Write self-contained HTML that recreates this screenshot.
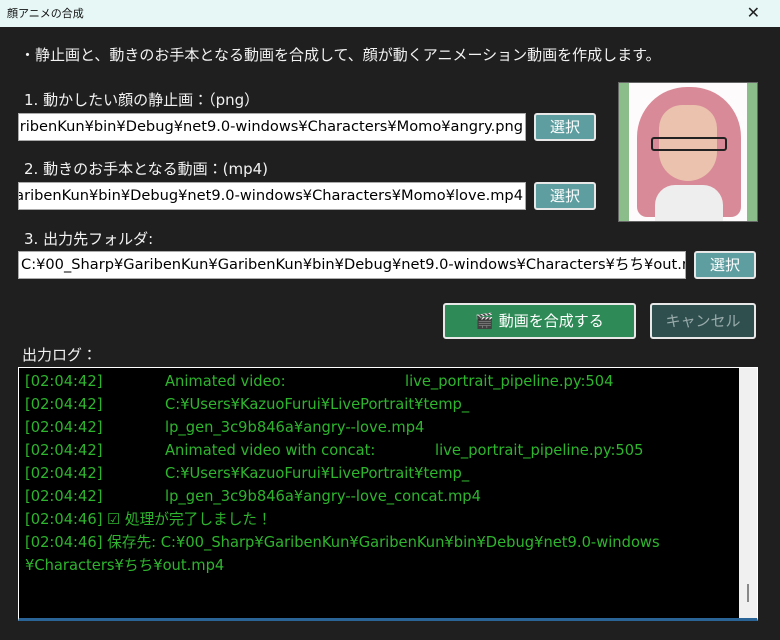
<!DOCTYPE html>
<html><head><meta charset="utf-8"><style>
*{margin:0;padding:0;box-sizing:border-box}
body{width:780px;height:640px;background:#1f1f1f;font-family:"DejaVu Sans","Noto Sans CJK JP",sans-serif;color:#fff;position:relative;overflow:hidden}
.abs{position:absolute}
.title{left:0;top:0;width:780px;height:27px;background:#e6f7f6;color:#111;font-size:11px;line-height:27px;padding-left:7px}
.lbl{font-size:15px;color:#f2f2f2;white-space:nowrap}
.inp{background:#fff;border:1px solid #aaa;color:#000;font-size:14.6px;line-height:26px;height:28px;overflow:hidden;white-space:nowrap}
.btn{background:#5f9ea0;border:2px solid #e8e8e8;border-radius:3px;color:#fff;font-size:15px;text-align:center;line-height:24px;height:28px}
.log{left:18px;top:367px;width:740px;height:254px;background:#000;border:1px solid #fff;border-bottom:3px solid #2a6496}
.ln{position:absolute;left:6px;color:#2eb52e;font-size:14.7px;white-space:nowrap;line-height:23px}
</style></head><body>
<div class="abs title">顔アニメの合成<span style="position:absolute;right:20px;top:0;font-size:16px;color:#222;font-family:'Liberation Sans',sans-serif">✕</span></div>
<div class="abs lbl" style="left:20px;top:44px">・静止画と、動きのお手本となる動画を合成して、顔が動くアニメーション動画を作成します。</div>
<div class="abs lbl" style="left:24px;top:89px">1. 動かしたい顔の静止画：（png）</div>
<div class="abs inp" style="left:18px;top:113px;width:508px;direction:rtl;text-align:right;padding-right:2px"><span style="direction:ltr;unicode-bidi:bidi-override">C:¥00_Sharp¥GaribenKun¥GaribenKun¥bin¥Debug¥net9.0-windows¥Characters¥Momo¥angry.png</span></div>
<div class="abs btn" style="left:534px;top:113px;width:62px">選択</div>
<div class="abs lbl" style="left:24px;top:158px">2. 動きのお手本となる動画：(mp4)</div>
<div class="abs inp" style="left:18px;top:182px;width:508px;direction:rtl;text-align:right;padding-right:2px"><span style="direction:ltr;unicode-bidi:bidi-override">C:¥00_Sharp¥GaribenKun¥GaribenKun¥bin¥Debug¥net9.0-windows¥Characters¥Momo¥love.mp4</span></div>
<div class="abs btn" style="left:534px;top:182px;width:62px">選択</div>
<div class="abs lbl" style="left:24px;top:228px">3. 出力先フォルダ:</div>
<div class="abs inp" style="left:18px;top:251px;width:668px;padding-left:2px">C:¥00_Sharp¥GaribenKun¥GaribenKun¥bin¥Debug¥net9.0-windows¥Characters¥ちち¥out.mp4</div>
<div class="abs btn" style="left:694px;top:251px;width:62px">選択</div>
<div class="abs" style="left:618px;top:82px;width:140px;height:140px;background:#8bbd8b;border:1px solid #666">
<div style="position:absolute;left:10px;top:0;width:118px;height:138px;background:#fdfbfb;overflow:hidden">
<div style="position:absolute;left:8px;top:4px;width:104px;height:130px;background:#d98a98;border-radius:50px 50px 10px 10px"></div>
<div style="position:absolute;left:30px;top:22px;width:58px;height:76px;background:#eac2ad;border-radius:24px 24px 30px 30px"></div>
<div style="position:absolute;left:22px;top:54px;width:76px;height:14px;border:2px solid #222;border-radius:3px"></div>
<div style="position:absolute;left:26px;top:102px;width:68px;height:40px;background:#eee;border-radius:20px 20px 0 0"></div>
</div></div>
<div class="abs" style="left:443px;top:303px;width:193px;height:36px;background:#2e8b57;border:2px solid #e8e8e8;border-radius:3px;color:#fff;font-size:15px;text-align:center;line-height:32px">🎬 動画を合成する</div>
<div class="abs" style="left:650px;top:303px;width:106px;height:36px;background:#2f4f4f;border:2px solid #e8e8e8;border-radius:3px;color:#9aa;font-size:15px;text-align:center;line-height:32px">キャンセル</div>
<div class="abs lbl" style="left:22px;top:344px">出力ログ：</div>
<div class="abs log">
<div class="ln" style="top:2px">[02:04:42]</div><div class="ln" style="left:146px;top:2px">Animated video:</div><div class="ln" style="left:386px;top:2px">live_portrait_pipeline.py:504</div>
<div class="ln" style="top:25px">[02:04:42]</div><div class="ln" style="left:146px;top:25px">C:¥Users¥KazuoFurui¥LivePortrait¥temp_</div>
<div class="ln" style="top:48px">[02:04:42]</div><div class="ln" style="left:146px;top:48px">lp_gen_3c9b846a¥angry--love.mp4</div>
<div class="ln" style="top:71px">[02:04:42]</div><div class="ln" style="left:146px;top:71px">Animated video with concat:</div><div class="ln" style="left:416px;top:71px">live_portrait_pipeline.py:505</div>
<div class="ln" style="top:94px">[02:04:42]</div><div class="ln" style="left:146px;top:94px">C:¥Users¥KazuoFurui¥LivePortrait¥temp_</div>
<div class="ln" style="top:117px">[02:04:42]</div><div class="ln" style="left:146px;top:117px">lp_gen_3c9b846a¥angry--love_concat.mp4</div>
<div class="ln" style="top:140px">[02:04:46] ☑ 処理が完了しました！</div>
<div class="ln" style="top:163px">[02:04:46] 保存先: C:¥00_Sharp¥GaribenKun¥GaribenKun¥bin¥Debug¥net9.0-windows</div>
<div class="ln" style="top:186px">¥Characters¥ちち¥out.mp4</div>
<div style="position:absolute;right:0;top:0;width:18px;height:250px;background:#f0f0f0"><div style="position:absolute;left:8px;top:216px;width:2px;height:18px;background:#888"></div></div>
</div>
</body></html>
